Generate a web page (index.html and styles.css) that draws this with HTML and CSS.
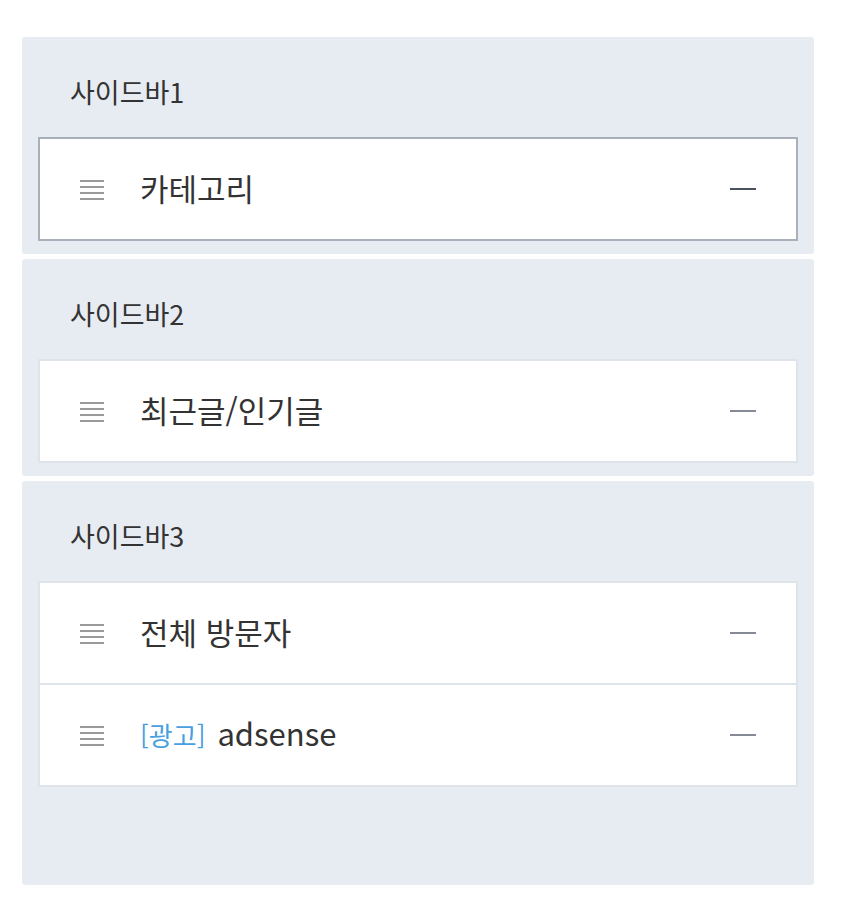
FILE: index.html
```html
<!DOCTYPE html>
<html lang="ko">
<head>
<meta charset="utf-8">
<link rel="stylesheet" href="styles.css">
</head>
<body>
<div class="page">
  <section class="area">
    <h2 class="area-title">사이드바1</h2>
    <ul class="list">
      <li class="item item-active">
        <span class="handle"><i></i><i></i><i></i><i></i></span>
        <span class="label">카테고리</span>
        <span class="minus minus-dark"></span>
      </li>
    </ul>
  </section>
  <section class="area">
    <h2 class="area-title">사이드바2</h2>
    <ul class="list">
      <li class="item">
        <span class="handle"><i></i><i></i><i></i><i></i></span>
        <span class="label">최근글/인기글</span>
        <span class="minus"></span>
      </li>
    </ul>
  </section>
  <section class="area area-tall">
    <h2 class="area-title">사이드바3</h2>
    <ul class="list">
      <li class="item">
        <span class="handle"><i></i><i></i><i></i><i></i></span>
        <span class="label">전체 방문자</span>
        <span class="minus"></span>
      </li>
      <li class="item">
        <span class="handle"><i></i><i></i><i></i><i></i></span>
        <span class="label"><span class="tag">[광고]</span>adsense</span>
        <span class="minus"></span>
      </li>
    </ul>
  </section>
</div>
</body>
</html>
```

FILE: styles.css
```css
* { box-sizing: border-box; }
html, body { margin: 0; padding: 0; background: #fff; }
body {
  font-family: "Noto Sans CJK KR", "Noto Sans", sans-serif;
  color: #333;
}
.page {
  padding: 37px 0 0 22px;
  width: 814px;
  display: flex;
  flex-direction: column;
  gap: 5px;
}
.area {
  background: #e7ebf2;
  border-radius: 3px;
  padding: 0 16px 13px;
}
.area-tall { min-height: 404px; }
.area-title {
  margin: 0;
  height: 100px;
  padding-left: 32px;
  font-size: 27px;
  font-weight: 400;
  line-height: 110px;
  color: #333;
}
.list { list-style: none; margin: 0; padding: 0; }
.item {
  display: flex;
  align-items: center;
  height: 104px;
  background: #fff;
  border: 2px solid #dfe3ea;
  padding: 0 40px 0 40px;
}
.item + .item { margin-top: -2px; }
.item-active { border-color: #a9b0bc; }
.handle {
  display: flex;
  flex-direction: column;
  gap: 4.3px;
  width: 24px;
  margin-right: 36px;
  margin-top: 2px;
}
.handle i {
  display: block;
  height: 1.7px;
  background: #9a9a9a;
}
.label {
  flex: 1;
  font-size: 31px;
  line-height: 40px;
  margin-top: -3px;
  color: #333;
}
.tag {
  color: #4a9fe0;
  font-size: 26px;
  margin-right: 12px;
}
.minus {
  width: 26px;
  height: 2px;
  background: #858b96;
}
.minus-dark { background: #4a5260; }
```
